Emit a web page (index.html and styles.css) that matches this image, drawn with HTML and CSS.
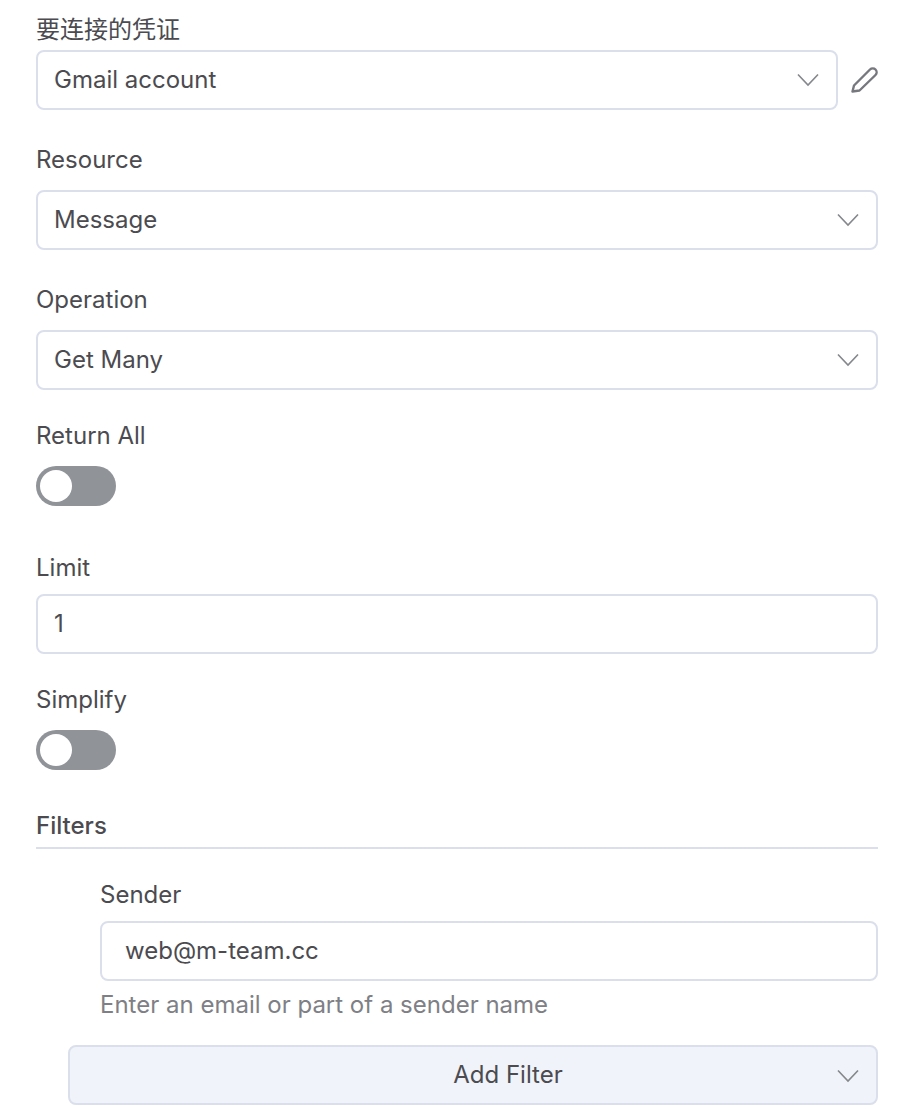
FILE: index.html
```html
<!DOCTYPE html>
<html lang="en">

<head>
    <meta charset="UTF-8">
    <meta name="viewport" content="width=device-width, initial-scale=1.0">
    <title>Gmail node</title>
    <link rel="stylesheet" href="styles.css">
</head>

<body>
    <div class="panel">
        <!-- Credential -->
        <div class="field field-credential">
            <div class="label">要连接的凭证</div>
            <div class="credential-row">
                <div class="input select">
                    <span>Gmail account</span>
                    <svg class="chevron" viewBox="0 0 22 14"><path d="M1 1.5 11 12 21 1.5"/></svg>
                </div>
                <svg class="pencil" viewBox="0 0 28 28"><path d="M2.5 25.5 4 19.5 20 3.5C21.5 2 24 2 25.5 3.5 27 5 27 7.5 25.5 9L9.5 24.5Z"/></svg>
            </div>
        </div>

        <div class="field field-select">
            <div class="label">Resource</div>
            <div class="input select">
                <span>Message</span>
                <svg class="chevron" viewBox="0 0 22 14"><path d="M1 1.5 11 12 21 1.5"/></svg>
            </div>
        </div>

        <div class="field field-select">
            <div class="label">Operation</div>
            <div class="input select">
                <span>Get Many</span>
                <svg class="chevron" viewBox="0 0 22 14"><path d="M1 1.5 11 12 21 1.5"/></svg>
            </div>
        </div>

        <div class="field field-switch">
            <div class="label">Return All</div>
            <div class="switch"><div class="knob"></div></div>
        </div>

        <div class="field field-limit">
            <div class="label">Limit</div>
            <div class="input">1</div>
        </div>

        <div class="field field-simplify">
            <div class="label">Simplify</div>
            <div class="switch"><div class="knob"></div></div>
        </div>

        <!-- Filters collection -->
        <div class="filters">
            <div class="filters-title">Filters</div>
            <div class="filter-item">
                <div class="label">Sender</div>
                <div class="input input-sender">web@m-team.cc</div>
                <div class="hint">Enter an email or part of a sender name</div>
            </div>
            <div class="add-filter">
                <span>Add Filter</span>
                <svg class="chevron" viewBox="0 0 22 14"><path d="M1 1.5 11 12 21 1.5"/></svg>
            </div>
        </div>
    </div>
</body>

</html>
```

FILE: styles.css
```css
/* Basic styling for the entire page */
body {
    font-family: Inter, "Noto Sans CJK SC", sans-serif;
    background-color: #fff;
    color: #4b4b50;
    margin: 0;
    padding: 0;
}

.panel {
    padding: 10px 34px 0 36px;
}

.label {
    font-size: 24px;
    line-height: 40px;
    height: 40px;
}

/* Inputs */
.input {
    display: flex;
    align-items: center;
    box-sizing: border-box;
    height: 60px;
    padding: 0 16px 2px;
    font-size: 24px;
    background-color: #fff;
    border: 2px solid #dadfeb;
    border-radius: 8px;
}

.select {
    justify-content: space-between;
    flex: 1;
    padding-right: 17px;
    padding-bottom: 0;
}

.select span {
    margin-bottom: 2px;
}

.chevron {
    width: 22px;
    height: 14px;
    fill: none;
    stroke: #85878c;
    stroke-width: 1.6;
}

.credential-row {
    display: flex;
    align-items: center;
}

.pencil {
    width: 28px;
    height: 28px;
    margin-left: 12px;
    fill: none;
    stroke: #77787e;
    stroke-width: 2.4;
    stroke-linejoin: round;
}

/* Field spacing */
.field-select {
    margin-top: 30px;
}

.field-select .label {
    margin-bottom: 10px;
}

.field-switch {
    margin-top: 26px;
}

.field-limit {
    margin-top: 42px;
}

.field-limit .label {
    margin-bottom: 6px;
}

.field-simplify {
    margin-top: 26px;
}

.field-switch .label,
.field-simplify .label {
    margin-bottom: 10px;
}

/* Toggle */
.switch {
    box-sizing: border-box;
    width: 80px;
    height: 40px;
    padding: 4px;
    background-color: #909398;
    border-radius: 20px;
}

.knob {
    width: 32px;
    height: 32px;
    background-color: #fff;
    border-radius: 50%;
}

/* Filters */
.filters {
    margin-top: 36px;
}

.filters-title {
    height: 41px;
    line-height: 40px;
    font-size: 24px;
    font-weight: 500;
    border-bottom: 2px solid #dadfeb;
}

.filter-item {
    margin-top: 26px;
    margin-left: 64px;
}

.filter-item .label {
    margin-bottom: 6px;
}

.input-sender {
    padding: 0 23px 2px;
}

.hint {
    margin-top: 4px;
    font-size: 24px;
    line-height: 40px;
    color: #7e8085;
}

.add-filter {
    display: flex;
    align-items: center;
    justify-content: center;
    position: relative;
    box-sizing: border-box;
    height: 60px;
    margin-top: 20px;
    margin-left: 32px;
    padding: 0 0 2px 70px;
    font-size: 24px;
    background-color: #f0f3f9;
    border: 2px solid #dadfeb;
    border-radius: 8px;
}

.add-filter .chevron {
    position: absolute;
    right: 17px;
    top: 22px;
}
```
